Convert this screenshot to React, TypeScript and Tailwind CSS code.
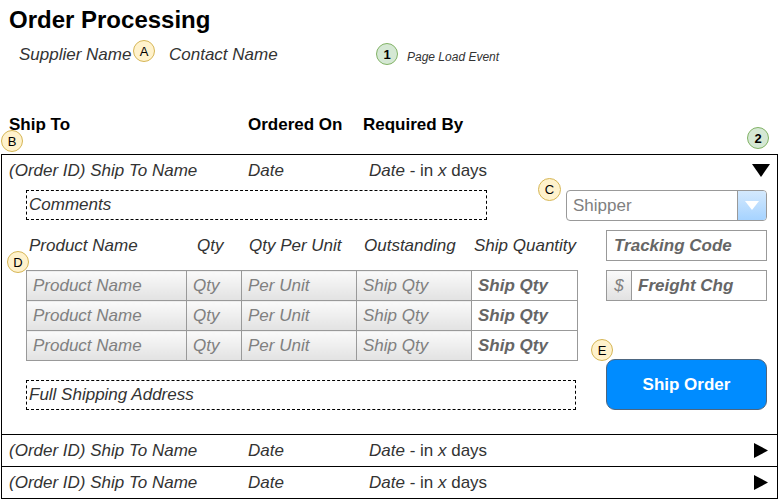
import React from "react";

const Badge = ({ label, green, className }: { label: string; green?: boolean; className: string }) => (
  <div
    className={`absolute flex items-center justify-center rounded-full border text-[13px] leading-none text-black ${
      green ? "border-[#82b366] bg-[#d5e8d4] font-bold" : "border-[#d6b656] bg-[#fff2cc]"
    } ${className}`}
  >
    {label}
  </div>
);

const DownTri = () => (
  <svg width="18" height="13" viewBox="0 0 18 13">
    <polygon points="0,0 18,0 9,13" fill="#000" />
  </svg>
);

const RightTri = () => (
  <svg width="14" height="15" viewBox="0 0 14 15">
    <polygon points="0,0 14,7.5 0,15" fill="#000" />
  </svg>
);

const OrderRow = ({ open }: { open?: boolean }) => (
  <div className="flex h-[31px] items-center pl-[7px] text-[17px] leading-[20px] text-[#333]">
    <span className="w-[239px] italic">(Order ID) Ship To Name</span>
    <span className="w-[121px] italic">Date</span>
    <span>
      <i>Date</i> - in <i>x</i> days
    </span>
    <span className={`ml-auto flex ${open ? "mr-[7px]" : "mr-[9px]"}`}>{open ? <DownTri /> : <RightTri />}</span>
  </div>
);

const lines = [1, 2, 3];

export default function App() {
  return (
    <div className="relative h-[500px] w-[779px] overflow-hidden bg-white font-['Liberation_Sans',Arial,sans-serif] text-[#222]">
      <h1 className="pl-[9px] pt-[6px] text-[24px] font-bold leading-[28px] text-black">Order Processing</h1>

      <div className="mt-[11px] flex h-[20px] items-center text-[17px] leading-[20px] text-[#333]">
        <span className="ml-[19px] w-[150px] italic">Supplier Name</span>
        <span className="w-[238px] italic">Contact Name</span>
        <span className="mt-[3px] text-[12px] italic">Page Load Event</span>
      </div>

      <div className="mt-[50px] flex h-[20px] items-center pl-[9px] text-[17px] font-bold leading-[20px] text-black">
        <span className="w-[239px]">Ship To</span>
        <span className="w-[115px]">Ordered On</span>
        <span>Required By</span>
      </div>

      <div className="ml-px mt-[19px] w-[777px] border border-black">
        <OrderRow open />
        <div className="flex pb-[24px] pl-[24px]">
          <div className="w-[551px]">
            <div className="mt-[4px] flex h-[30px] w-[461px] items-center border border-dashed border-black pl-[2px] text-[17px] italic text-[#333]">
              Comments
            </div>
            <div className="mt-[16px] flex h-[20px] items-center text-[17px] italic leading-[20px] text-[#333]">
              <span className="w-[171px] pl-[3px]">Product Name</span>
              <span className="w-[52px]">Qty</span>
              <span className="w-[115px]">Qty Per Unit</span>
              <span className="w-[110px]">Outstanding</span>
              <span>Ship Quantity</span>
            </div>
            <table className="mt-[14px] w-[551px] table-fixed border-collapse text-[17px] italic leading-[20px]">
              <colgroup>
                <col className="w-[160px]" />
                <col className="w-[55px]" />
                <col className="w-[115px]" />
                <col className="w-[115px]" />
                <col className="w-[106px]" />
              </colgroup>
              <tbody>
                {lines.map((n) => (
                  <tr key={n} className="h-[30px]">
                    {["Product Name", "Qty", "Per Unit", "Ship Qty"].map((t) => (
                      <td
                        key={t}
                        className="border border-[#999] bg-linear-to-b from-[#fafafa] to-[#e2e2e2] pl-[6px] text-[#808080]"
                      >
                        {t}
                      </td>
                    ))}
                    <td className="border border-[#999] bg-white pl-[6px] font-bold text-[#666]">Ship Qty</td>
                  </tr>
                ))}
              </tbody>
            </table>
            <div className="mt-[19px] flex h-[30px] w-[550px] items-center border border-dashed border-black pl-[2px] text-[17px] italic text-[#333]">
              Full Shipping Address
            </div>
          </div>

          <div className="ml-[29px] w-[161px]">
            <div className="-ml-[40px] mt-[4px] flex h-[31px] w-[201px] overflow-hidden rounded-[4px] border border-[#999]">
              <span className="flex flex-1 items-center pl-[6px] text-[17px] text-[#808080]">Shipper</span>
              <span className="flex w-[29px] items-center justify-center border-l border-[#999] bg-linear-to-b from-[#d4e9fd] to-[#a6d3ff]">
                <svg width="14" height="9" viewBox="0 0 14 9">
                  <polygon points="0,0 14,0 7,9" fill="#fff" />
                </svg>
              </span>
            </div>
            <div className="mt-[9px] flex h-[31px] items-center border border-[#999] pl-[7px] text-[17px] font-bold italic text-[#666]">
              Tracking Code
            </div>
            <div className="mt-[9px] flex h-[31px] border border-[#999] text-[17px] italic">
              <span className="flex w-[25px] items-center justify-center border-r border-[#999] bg-linear-to-b from-[#fafafa] to-[#e2e2e2] text-[#808080]">
                $
              </span>
              <span className="flex items-center pl-[6px] font-bold text-[#666]">Freight Chg</span>
            </div>
            <button className="mt-[58px] flex h-[51px] w-[161px] items-center justify-center rounded-[9px] border border-[#4d6680] bg-[#008cff] text-[17px] font-bold text-white">
              Ship Order
            </button>
          </div>
        </div>
        <div className="border-t border-black">
          <OrderRow />
        </div>
        <div className="border-t border-black">
          <OrderRow />
        </div>
      </div>

      <Badge label="A" className="left-[133px] top-[40px] h-[22px] w-[22px]" />
      <Badge label="1" green className="left-[376px] top-[43px] h-[22px] w-[22px]" />
      <Badge label="B" className="left-[1px] top-[130px] h-[22px] w-[22px]" />
      <Badge label="2" green className="left-[747px] top-[127px] h-[22px] w-[22px]" />
      <Badge label="C" className="left-[538px] top-[178px] h-[23px] w-[23px]" />
      <Badge label="D" className="left-[7px] top-[251px] h-[22px] w-[22px]" />
      <Badge label="E" className="left-[591px] top-[339px] h-[22px] w-[22px]" />
    </div>
  );
}
